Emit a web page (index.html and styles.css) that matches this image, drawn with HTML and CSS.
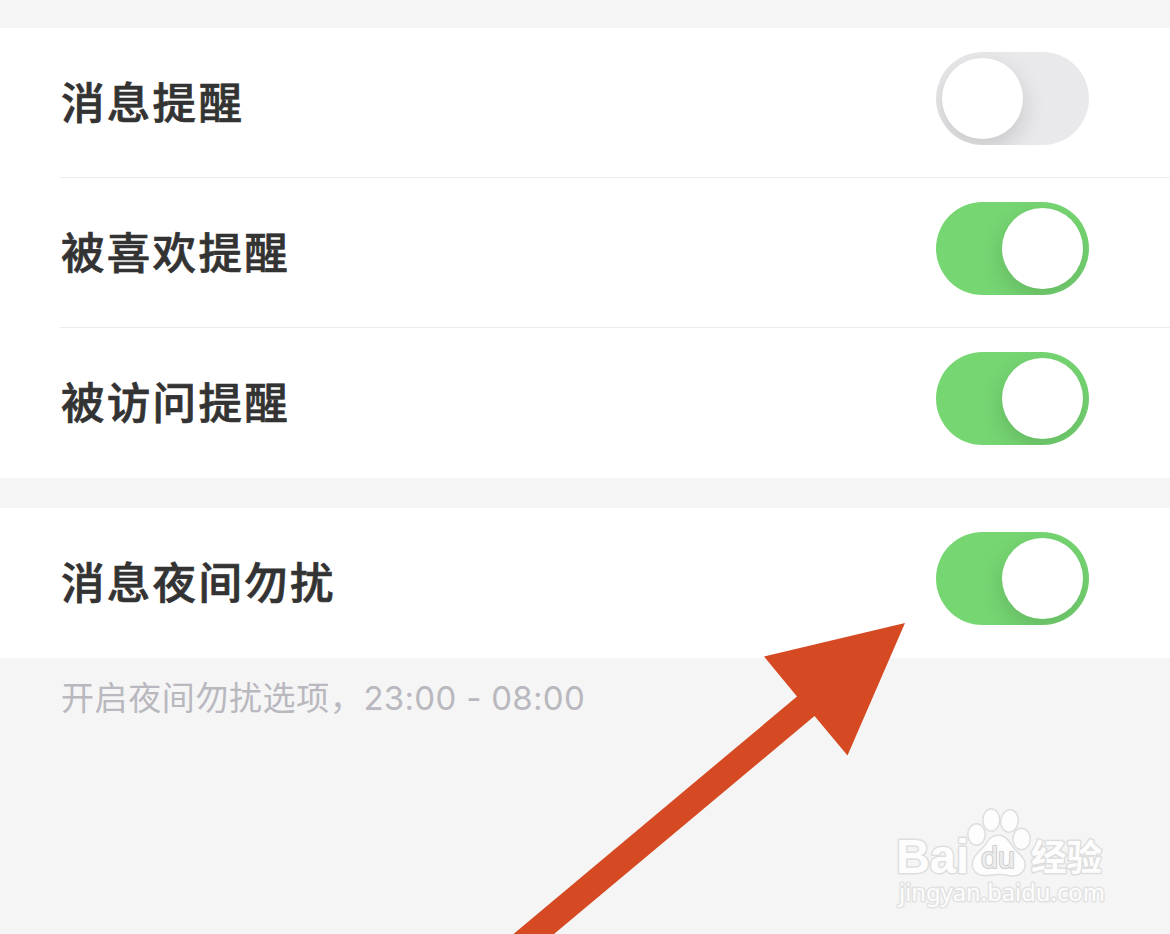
FILE: index.html
```html
<!DOCTYPE html>
<html lang="zh-CN">
<head>
    <meta charset="UTF-8">
    <meta name="viewport" content="width=device-width, initial-scale=1.0">
    <title>消息提醒</title>
    <link rel="stylesheet" href="styles.css">
</head>
<body>
<main class="settings">
    <section class="group">
        <div class="row">
            <span class="label">消息提醒</span>
            <button class="switch" role="switch" aria-checked="false" aria-label="消息提醒"></button>
        </div>
        <div class="row">
            <span class="label">被喜欢提醒</span>
            <button class="switch on" role="switch" aria-checked="true" aria-label="被喜欢提醒"></button>
        </div>
        <div class="row">
            <span class="label">被访问提醒</span>
            <button class="switch on" role="switch" aria-checked="true" aria-label="被访问提醒"></button>
        </div>
    </section>
    <section class="group">
        <div class="row">
            <span class="label">消息夜间勿扰</span>
            <button class="switch on" role="switch" aria-checked="true" aria-label="消息夜间勿扰"></button>
        </div>
    </section>
    <p class="hint">开启夜间勿扰选项，<span class="time">23:00 - 08:00</span></p>
</main>

<!-- arrow pointing at the last switch -->
<svg class="arrow" width="394" height="312" viewBox="0 0 394 312">
    <path d="M393 1L252 34.500L285 74.500L1.500 312H42L302.500 94L335.500 133.500Z"/>
</svg>

<svg class="watermark" width="230" height="110" viewBox="890 800 230 110">
    <g class="mark">
        <text class="brand" x="896" y="873" textLength="73" lengthAdjust="spacingAndGlyphs">Bai</text>
        <ellipse cx="976.500" cy="834.500" rx="8" ry="10"/>
        <ellipse cx="991.300" cy="820" rx="7.700" ry="10.500"/>
        <ellipse cx="1009.500" cy="821" rx="8" ry="10.500" transform="rotate(8 1009.500 821)"/>
        <ellipse cx="1021.500" cy="839" rx="8" ry="10"/>
        <path d="M998.500 836C1005 836 1008 841 1012 847C1017 854 1025 858 1024.500 865C1024 873 1017 876 1010 875C1003 873.500 996 873.500 990 874.500C981 876 973 873 973 864C973 856 981 852 986 845C989 840 992 836 998.500 836Z"/>
        <text class="du" x="981" y="868" textLength="34" lengthAdjust="spacingAndGlyphs">du</text>
        <text class="cn" x="1031" y="871" textLength="71" lengthAdjust="spacingAndGlyphs">经验</text>
        <text class="url" x="899" y="901" textLength="206" lengthAdjust="spacingAndGlyphs">jingyan.baidu.com</text>
    </g>
</svg>
</body>
</html>
```
FILE: styles.css
```css
* {
    box-sizing: border-box;
}
body {
    margin: 0;
    height: 934px;
    position: relative;
    overflow: hidden;
    background: #f5f5f5;
    color: #333;
    font-family: "Noto Sans CJK SC", sans-serif;
}
.settings {
    padding-top: 28px;
}
.group {
    background: #fff;
}
.group + .group {
    margin-top: 30px;
}
.row {
    display: flex;
    align-items: center;
    justify-content: space-between;
    height: 150px;
    margin-left: 60px;
    padding: 0 81px 9px 0;
    border-bottom: 1px solid #ececec;
}
.row:last-child {
    border-bottom-color: transparent;
}
.label {
    font-size: 43.5px;
    font-weight: 500;
    line-height: 64px;
    letter-spacing: 2.3px;
    padding: 5px 0 0 1px;
    -webkit-text-stroke: 0.7px #333;
}
.switch {
    display: flex;
    width: 153px;
    height: 93px;
    padding: 6px;
    border: 0;
    border-radius: 47px;
    background: #e9e9eb;
    overflow: hidden;
}
.switch::before {
    content: "";
    width: 81px;
    height: 81px;
    border-radius: 50%;
    background: #fff;
    box-shadow: 0 9px 24px rgba(0, 0, 0, 0.15);
}
.switch.on {
    justify-content: flex-end;
    background: #76d672;
}
.hint {
    margin: 0;
    padding: 14px 60px 0 61px;
    color: #b9b8bf;
    font-size: 33px;
    line-height: 48px;
    letter-spacing: 0.6px;
    white-space: nowrap;
}
.time {
    font-family: Inter, sans-serif;
    letter-spacing: 0.3px;
}
.arrow {
    position: absolute;
    left: 512px;
    top: 622px;
    fill: #d54a22;
}
/* Watermark in the corner */
.watermark {
    position: absolute;
    left: 890px;
    top: 800px;
}
.mark {
    fill: #fdfdfd;
    stroke: #dedede;
    stroke-width: 3px;
    stroke-linejoin: round;
    paint-order: stroke;
}
.brand {
    font: bold 48px "Liberation Sans", sans-serif;
}
.du {
    font: 30px "Liberation Sans", sans-serif;
    fill: #ececec;
    stroke: #cfcfcf;
    stroke-width: 2px;
}
.cn {
    font: bold 36px "Noto Sans CJK SC", sans-serif;
}
.url {
    font: 24px "Noto Sans", sans-serif;
    stroke: #e2e2e2;
}
```
